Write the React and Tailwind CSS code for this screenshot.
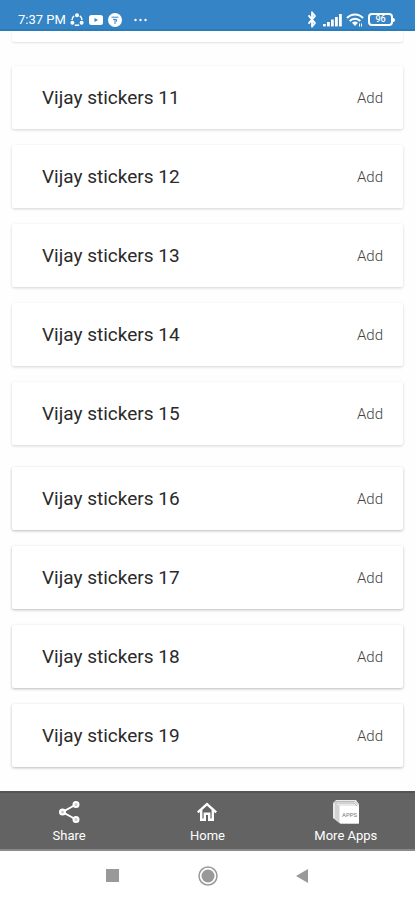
import { Bluetooth } from "lucide-react";

const stickerGroups = [
  { numbers: [11, 12, 13, 14, 15], shadow: "shadow-[0_1px_3px_rgba(0,0,0,0.17)]" },
  { numbers: [16, 17, 18, 19], shadow: "shadow-[0_1px_3px_rgba(0,0,0,0.27)]" },
];

function StatusBar() {
  return (
    <header className="relative z-10 flex h-[31px] items-center justify-between border-b-2 border-[#2a7cb9] bg-[#3584c5] pt-2.5 pr-5 pl-[18px] text-white">
      <div className="flex items-center gap-1">
        <span className="text-[13px] leading-4">7:37 PM</span>
        <svg width="14" height="14" viewBox="0 0 14 14" fill="none" aria-hidden="true">
          <path d="M4.200 2.800A5 5 0 0 0 2 7M9.800 2.800A5 5 0 0 1 12 7M4.800 11.800a5 5 0 0 0 4.400 0" stroke="currentColor" strokeWidth="1.500" />
          <circle cx="7" cy="2.300" r="2" fill="currentColor" />
          <circle cx="2.400" cy="9.800" r="2" fill="currentColor" />
          <circle cx="11.600" cy="9.800" r="2" fill="currentColor" />
        </svg>
        <svg className="ml-px" width="14" height="12" viewBox="0 0 14 12" aria-hidden="true">
          <rect y="1" width="14" height="10" rx="2.5" fill="currentColor" />
          <path d="M5.5 4v4l3.5-2z" fill="#3584c5" />
        </svg>
        <svg className="ml-px" width="14" height="14" viewBox="0 0 14 14" aria-hidden="true">
          <circle cx="7" cy="7" r="7" fill="currentColor" />
          <path d="M3.5 4.2h7M5 6.4h3.5v2.2M7 6.5v4.5" fill="none" stroke="#3584c5" strokeWidth="1" />
        </svg>
        <svg className="ml-2" width="14" height="4" viewBox="0 0 14 4" fill="currentColor" aria-hidden="true">
          <circle cx="1.5" cy="2" r="1.2" />
          <circle cx="6.5" cy="2" r="1.2" />
          <circle cx="11.5" cy="2" r="1.2" />
        </svg>
      </div>

      <div className="flex items-center gap-1">
        <Bluetooth width={14} height={17} strokeWidth={3} preserveAspectRatio="none" />
        <svg width="19" height="14" viewBox="0 0 19 14" fill="currentColor" aria-hidden="true">
          <rect x="0" y="11" width="2.8" height="2.4" />
          <rect x="4" y="9" width="2.8" height="4.4" />
          <rect x="8" y="6.5" width="2.8" height="6.9" />
          <rect x="12" y="4" width="2.8" height="9.4" />
          <rect x="16" y="1" width="2.8" height="12.4" />
        </svg>
        <svg width="18" height="14" viewBox="0 0 18 14" fill="none" stroke="currentColor" aria-hidden="true">
          <path d="M1 5C5.500.3 12.500.3 17 5M3.700 8c3-3.100 7.600-3.100 10.600 0" strokeWidth="2" />
          <path d="M6 9.700c1.800-1.600 4.200-1.600 6 0L9 13z" fill="currentColor" stroke="none" />
          <path d="M13.500 10.500v3M15.500 13.500v-3" strokeWidth="1" />
        </svg>
        <div className="flex items-center">
          <span className="flex h-[13px] w-[25px] items-center justify-center rounded-[4px] border-2 border-white text-[9px] leading-none font-medium">
            96
          </span>
          <span className="h-1 w-0.5 rounded-r-sm bg-white" />
        </div>
      </div>
    </header>
  );
}

function StickerCard({ number, shadow }) {
  const titleId = `sticker-${number}`;
  return (
    <li className={`flex h-[63px] items-center justify-between rounded-xs bg-white pr-5 pl-[30px] ${shadow}`}>
      <h2 id={titleId} className="text-[19px] leading-7 text-[#2a2a2a]">
        Vijay stickers {number}
      </h2>
      <button
        type="button"
        aria-describedby={titleId}
        className="cursor-pointer text-[15px] leading-5 font-light text-[#444]"
      >
        Add
      </button>
    </li>
  );
}

function ShareIcon() {
  return (
    <svg width="24" height="24" viewBox="0 0 24 24" fill="none" stroke="currentColor" aria-hidden="true">
      <path d="M19 4.500 5.500 12 19 19.500" strokeWidth="2" />
      <circle cx="19" cy="4.500" r="2.500" fill="#ccc" strokeWidth="2" />
      <circle cx="5.500" cy="12" r="2.500" fill="#ccc" strokeWidth="2" />
      <circle cx="19" cy="19.500" r="2.500" fill="#ccc" strokeWidth="2" />
    </svg>
  );
}

function HomeIcon() {
  return (
    <svg width="24" height="24" viewBox="0 0 24 24" fill="none" stroke="currentColor" strokeWidth="2.400" aria-hidden="true">
      <path d="M2.800 12.300 12 4l9.200 8.300" />
      <path d="M6.200 10v9.800h3.600v-6h4.400v6h3.600V10" />
    </svg>
  );
}

function AppsIcon() {
  return (
    <svg width="28" height="24" viewBox="0 0 28 24" aria-hidden="true">
      <path d="M1 3l3-3h20l3 4v19.500H8L1 18z" fill="#e9e9e9" />
      <path d="M1.500 3h20.500l3 3M3 1.500h20l3 3M4 3.500v16M6 5v17" fill="none" stroke="#aaa" strokeWidth=".7" />
      <rect x="8" y="6" width="19" height="17.500" rx="1" fill="#fff" />
      <text x="17.500" y="17" textAnchor="middle" fontSize="6" fill="#777">
        APPS
      </text>
    </svg>
  );
}

const tabs = [
  { label: "Share", icon: <ShareIcon /> },
  { label: "Home", icon: <HomeIcon /> },
  { label: "More Apps", icon: <AppsIcon /> },
];

function TabBar() {
  return (
    <nav className="grid h-[60px] grid-cols-3 border-t-2 border-b-2 border-t-[#545454] border-b-[#8a8a8a] bg-[#636363] text-white">
      {tabs.map((tab) => (
        <button
          key={tab.label}
          type="button"
          className="flex cursor-pointer flex-col items-center justify-center gap-1 pt-0.5 text-[13px] leading-4"
        >
          {tab.icon}
          {tab.label}
        </button>
      ))}
    </nav>
  );
}

function SystemNav() {
  return (
    <div className="flex h-[49px] items-center justify-center gap-[78px] bg-white text-[#999]">
      <button type="button" aria-label="Recent apps" className="cursor-pointer">
        <svg width="14" height="14" viewBox="0 0 14 14" fill="currentColor">
          <rect width="13" height="13" />
        </svg>
      </button>
      <button type="button" aria-label="Home screen" className="cursor-pointer">
        <svg width="20" height="20" viewBox="0 0 20 20">
          <circle cx="10" cy="10" r="9" fill="none" stroke="currentColor" strokeWidth="1.500" />
          <circle cx="10" cy="10" r="6.500" fill="currentColor" />
        </svg>
      </button>
      <button type="button" aria-label="Back" className="cursor-pointer">
        <svg width="14" height="14" viewBox="0 0 14 14" fill="currentColor">
          <path d="M12 0v14L0 7z" />
        </svg>
      </button>
    </div>
  );
}

function App() {
  return (
    <div className="flex min-h-screen flex-col bg-[#fefefe] font-['Roboto',sans-serif]">
      <StatusBar />
      <main className="flex-1 px-3 pb-6">
        {/* tail of the card that is scrolled under the status bar */}
        <div className="h-[11px] rounded-b-xs bg-white shadow-[0_1px_2px_rgba(0,0,0,0.12)]" />
        <div className="flex flex-col gap-[22px] pt-6">
          {stickerGroups.map((group) => (
            <ul key={group.numbers[0]} className="flex flex-col gap-4">
              {group.numbers.map((number) => (
                <StickerCard key={number} number={number} shadow={group.shadow} />
              ))}
            </ul>
          ))}
        </div>
      </main>
      <TabBar />
      <SystemNav />
    </div>
  );
}

export default App;
